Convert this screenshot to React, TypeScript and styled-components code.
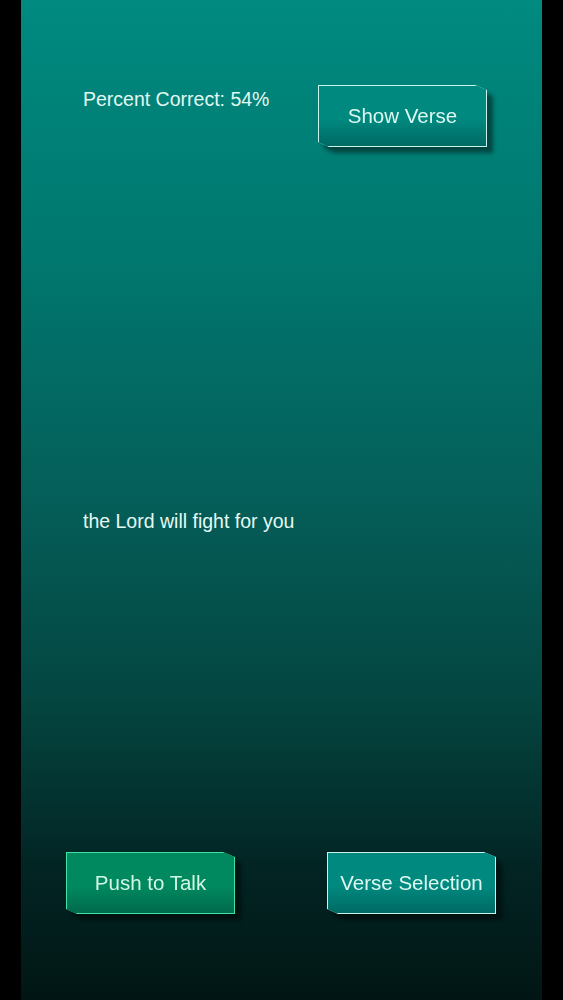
import React from 'react';
import styled, { createGlobalStyle } from 'styled-components';

const GlobalStyle = createGlobalStyle`
  html, body {
    margin: 0;
    padding: 0;
    background: #000;
  }
  body {
    font-family: "Liberation Sans", Arial, sans-serif;
  }
`;

type Tone = 'teal' | 'green';

const tones = {
  teal: { edge: '#c9f3ec', top: '#00897f', bottom: '#006a64', text: '#dcf8f1' },
  green: { edge: '#3fe3a6', top: '#00895f', bottom: '#006a4c', text: '#d2f7e4' },
};

const App: React.FC = () => {
  return (
    <>
      <GlobalStyle />
      <Screen>
        <Header>
          <Score>Percent Correct: 54%</Score>
          <GameButton>
            <ButtonFace>Show Verse</ButtonFace>
          </GameButton>
        </Header>
        <Transcript>the Lord will fight for you</Transcript>
        <Footer>
          <GameButton>
            <ButtonFace $tone="green">Push to Talk</ButtonFace>
          </GameButton>
          <GameButton>
            <ButtonFace>Verse Selection</ButtonFace>
          </GameButton>
        </Footer>
      </Screen>
    </>
  );
};

const Screen = styled.div`
  width: 521px;
  height: 1000px;
  margin: 0 0 0 21px;
  display: flex;
  flex-direction: column;
  background: linear-gradient(
    to bottom,
    #008a80 0%,
    #00786f 25%,
    #055e59 50%,
    #044540 70%,
    #022423 87%,
    #011614 100%
  );
  color: #e0f6ef;
`;

const Header = styled.div`
  display: flex;
  justify-content: space-between;
  align-items: flex-start;
  padding: 85px 55px 0 62px;
`;

const Score = styled.div`
  font-size: 19.5px;
  margin-top: 3px;
  color: #e4f8f2;
`;

const Transcript = styled.div`
  margin-top: 363px;
  padding-left: 62px;
  font-size: 19.5px;
  color: #e4f8f2;
`;

const Footer = styled.div`
  margin-top: auto;
  display: flex;
  justify-content: space-between;
  padding: 0 46px 86px 45px;
`;

const GameButton = styled.button`
  border: none;
  background: none;
  padding: 0;
  cursor: pointer;
  filter: drop-shadow(6px 6px 2px rgba(0, 0, 0, 0.45));
`;

const ButtonFace = styled.span<{ $tone?: Tone }>`
  display: flex;
  align-items: center;
  justify-content: center;
  width: 169px;
  height: 62px;
  box-sizing: border-box;
  padding: 1.5px;
  font-family: "Liberation Sans", Arial, sans-serif;
  font-size: 20.5px;
  color: ${({ $tone = 'teal' }) => tones[$tone].text};
  background:
    linear-gradient(
      to bottom,
      ${({ $tone = 'teal' }) => tones[$tone].top} 0%,
      ${({ $tone = 'teal' }) => tones[$tone].top} 55%,
      ${({ $tone = 'teal' }) => tones[$tone].bottom} 100%
    ) padding-box,
    ${({ $tone = 'teal' }) => tones[$tone].edge} border-box;
  border: 1.5px solid transparent;
  clip-path: polygon(0 0, 157px 0, 100% 5px, 100% 100%, 11px 100%, 0 calc(100% - 5px));
`;

export default App;
